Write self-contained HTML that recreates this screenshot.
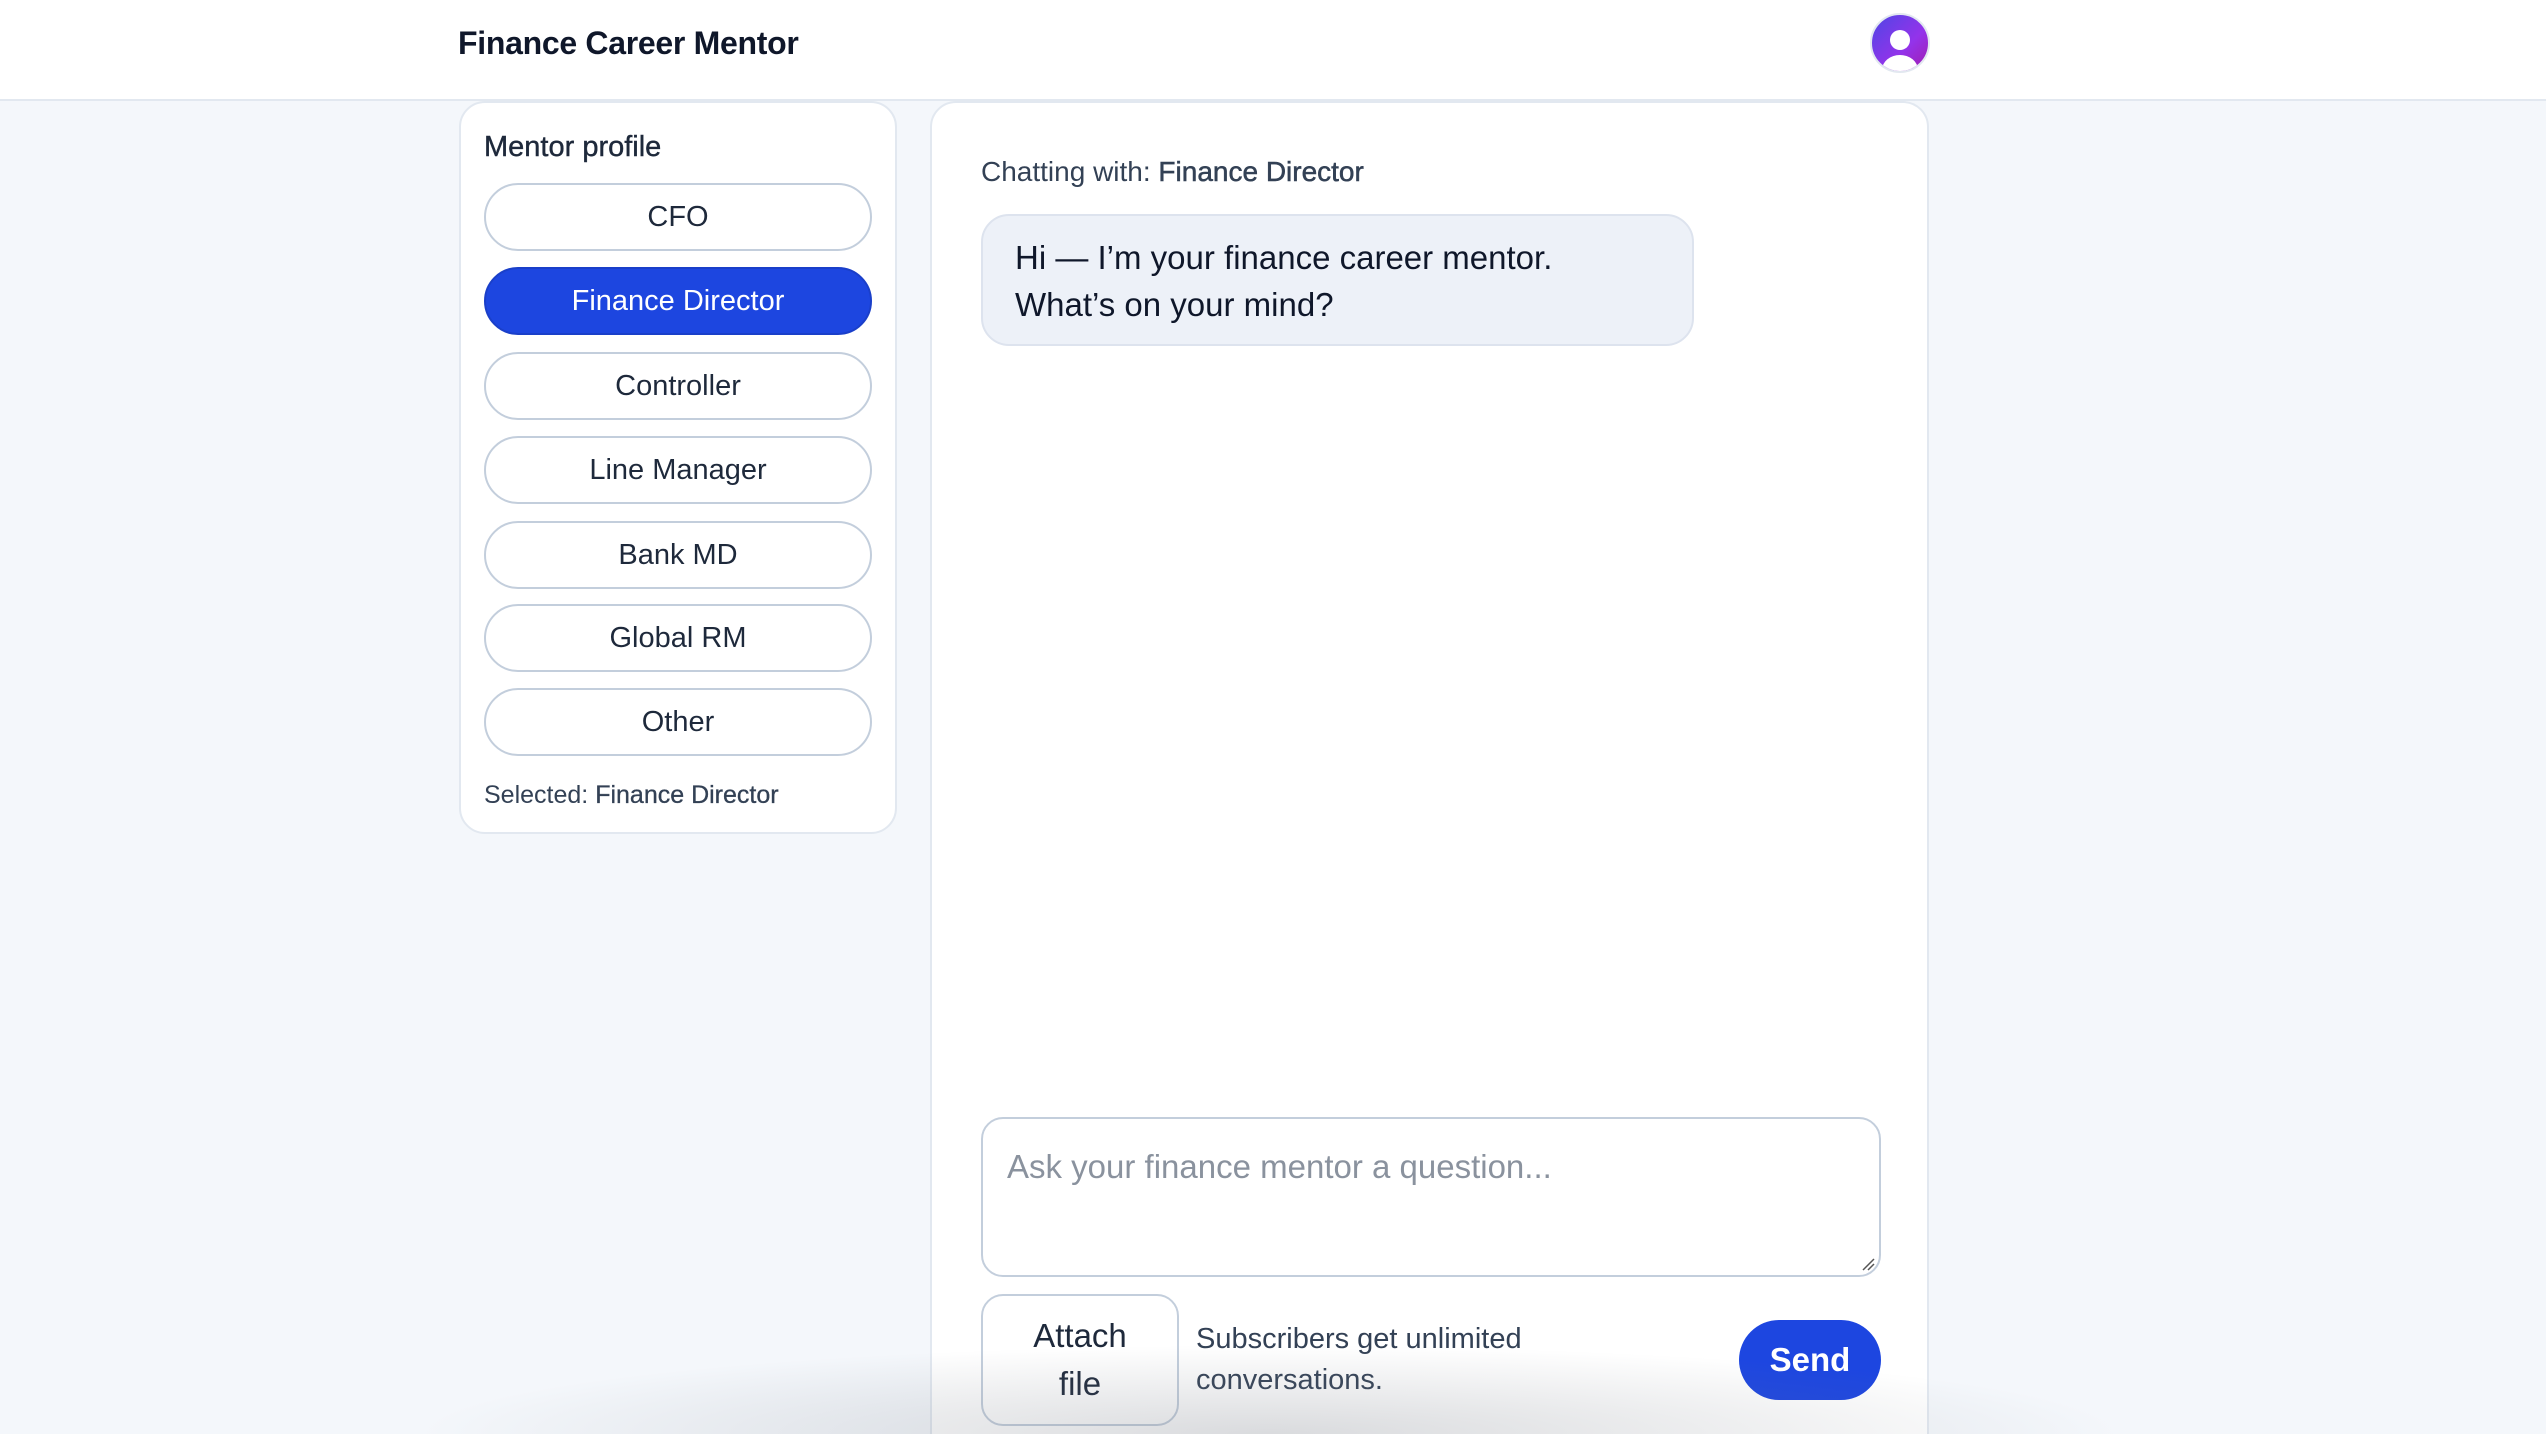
<!DOCTYPE html>
<html><head><meta charset="utf-8"><style>
*{box-sizing:border-box;margin:0;padding:0}
html,body{width:2546px;height:1434px;overflow:hidden}
body{background:#f4f7fb;font-family:"Liberation Sans",Arial,sans-serif;color:#1e293b;position:relative}
.hdr{position:absolute;left:0;top:0;width:2546px;height:101px;background:#fff;border-bottom:2px solid #e2e8f0}
.title{position:absolute;left:458px;top:25px;font-size:32px;font-weight:bold;color:#0f172a;letter-spacing:-0.3px}
.av{position:absolute;left:1870px;top:13px;width:60px;height:60px;border-radius:50%;border:2px solid #e2e8f0;overflow:hidden;background:linear-gradient(135deg,#4f46e5,#9333ea 60%,#a21caf)}
.card{position:absolute;background:#fff;border:2px solid #e2e8f0;border-radius:26px}
.btn{position:absolute;left:23px;width:388px;height:68px;border:2px solid #c3cedc;border-radius:34px;background:#fff;text-align:center;line-height:64px;font-size:29px;color:#1e293b}
.btn.on{background:#1d46e0;border-color:#1a3fc9;color:#fff}
.sel{position:absolute;left:23px;top:678px;font-size:25px;color:#334155}
</style></head><body>
<div class="hdr"><div class="title">Finance Career Mentor</div>
<div class="av"><div style="position:absolute;left:18px;top:15px;width:20px;height:20px;border-radius:50%;background:#fff"></div><div style="position:absolute;left:10px;top:40px;width:36px;height:30px;border-radius:50%;background:#fff"></div></div></div>

<div class="card" style="left:459px;top:101px;width:438px;height:733px">
<div style="position:absolute;left:23px;top:28px;font-size:29px;color:#1e293b;-webkit-text-stroke:0.4px #1e293b">Mentor profile</div>
<div class="btn" style="top:80px">CFO</div>
<div class="btn on" style="top:164px">Finance Director</div>
<div class="btn" style="top:249px">Controller</div>
<div class="btn" style="top:333px">Line Manager</div>
<div class="btn" style="top:418px">Bank MD</div>
<div class="btn" style="top:501px">Global RM</div>
<div class="btn" style="top:585px">Other</div>
<div class="sel">Selected: <span style="-webkit-text-stroke:0.3px #334155">Finance Director</span></div>
</div>

<div class="card" style="left:930px;top:101px;width:999px;height:1360px">
<div style="position:absolute;left:49px;top:53px;font-size:28px;color:#334155">Chatting with: <span style="-webkit-text-stroke:0.5px #334155">Finance Director</span></div>
<div style="position:absolute;left:49px;top:111px;width:713px;height:132px;background:#edf1f8;border:2px solid #dde3ee;border-radius:28px;padding:18px 32px;font-size:33px;line-height:47px;color:#0f172a">Hi — I’m your finance career mentor.<br>What’s on your mind?</div>
<div style="position:absolute;left:49px;top:1014px;width:900px;height:160px;border:2px solid #c3cedc;border-radius:22px;background:#fff;padding:29px 24px;font-size:33px;color:#8a929e">Ask your finance mentor a question...
<svg style="position:absolute;right:4px;bottom:4px" width="14" height="14"><path d="M2 13L13 2M7 13L13 7" stroke="#555" stroke-width="1.5"/></svg></div>
<div style="position:absolute;left:49px;top:1191px;width:198px;height:132px;border:2px solid #c3cedc;border-radius:22px;text-align:center;padding-top:16px;font-size:33px;line-height:48px;color:#1e293b">Attach<br>file</div>
<div style="position:absolute;left:264px;top:1216px;font-size:29px;line-height:41px;color:#334155">Subscribers get unlimited<br>conversations.</div>
<div style="position:absolute;left:807px;top:1217px;width:142px;height:80px;border-radius:40px;background:#1d46e0;color:#fff;font-size:33px;font-weight:bold;text-align:center;line-height:80px">Send</div>
</div>
<div style="position:absolute;left:420px;top:1345px;width:1700px;height:89px;background:radial-gradient(ellipse 50% 100% at 50% 100%,rgba(120,125,135,0.28),rgba(120,125,135,0) 100%);pointer-events:none"></div>
</body></html>
